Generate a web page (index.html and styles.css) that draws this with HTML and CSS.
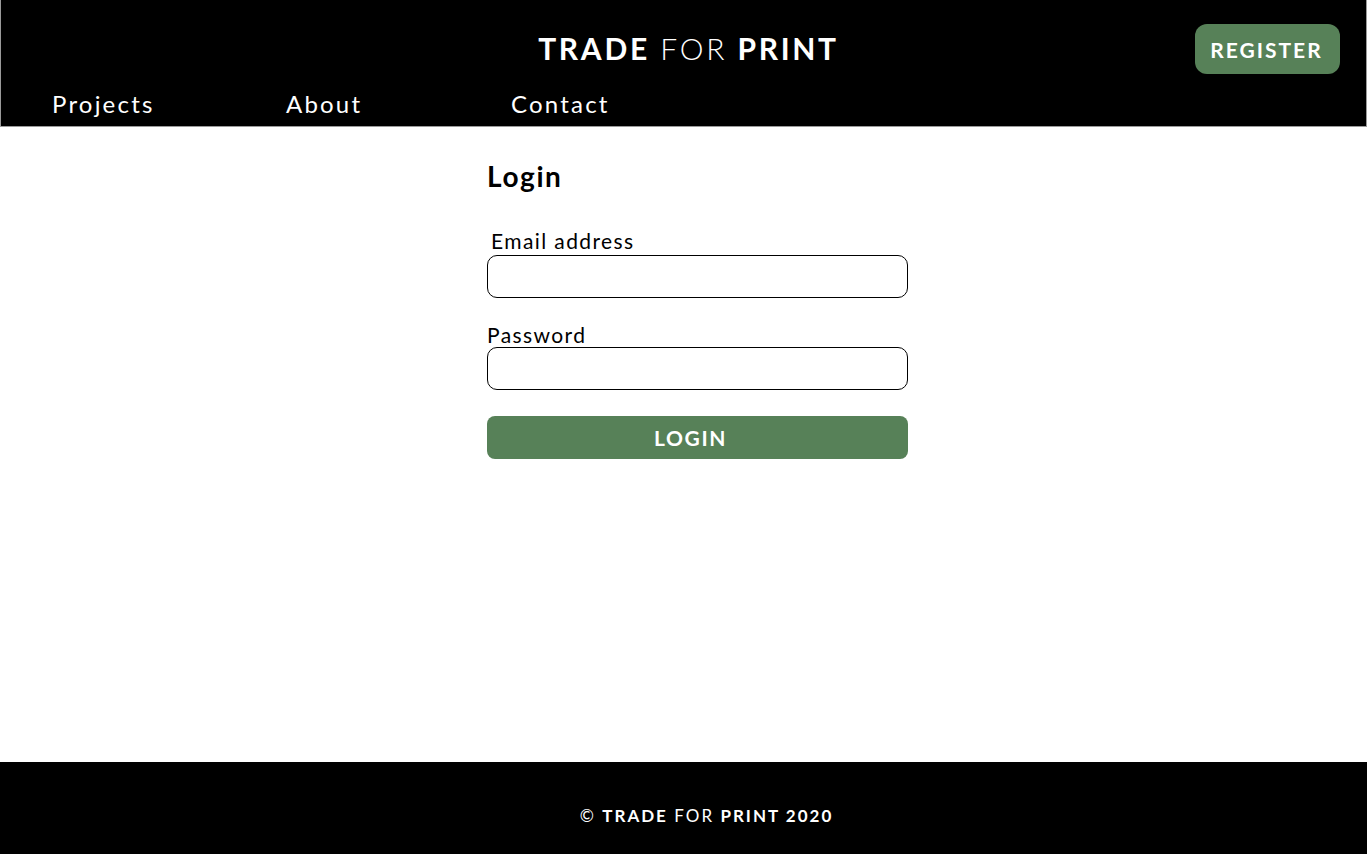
FILE: index.html
```html
<!DOCTYPE html>
<html lang="en">
<head>
<meta charset="utf-8">
<title>Trade For Print - Login</title>
<link rel="stylesheet" href="styles.css">
</head>
<body>
<div class="page">
  <header class="header">
    <div class="top-row">
      <div class="brand"><b>TRADE</b> <span class="light">FOR</span> <b>PRINT</b></div>
      <a class="register" href="#">REGISTER</a>
    </div>
    <nav class="nav">
      <a href="#" class="nav-projects">Projects</a>
      <a href="#" class="nav-about">About</a>
      <a href="#" class="nav-contact">Contact</a>
    </nav>
  </header>
  <main class="main">
    <form class="login-form">
      <h1 class="title">Login</h1>
      <label class="label label-email">Email address</label>
      <input class="field" type="email">
      <label class="label label-password">Password</label>
      <input class="field" type="password">
      <button class="login-btn" type="button">LOGIN</button>
    </form>
  </main>
  <footer class="footer">
    <p class="footer-text">© <b>TRADE</b> <span class="light">FOR</span> <b>PRINT 2020</b></p>
  </footer>
</div>
</body>
</html>
```
FILE: styles.css
```css
* { box-sizing: border-box; }
html, body { margin: 0; padding: 0; }
body {
  font-family: "Lato", "Open Sans", sans-serif;
  color: #000;
  background: #fff;
}
.page {
  display: flex;
  flex-direction: column;
  min-height: 854px;
}
.header {
  background: #000;
  color: #fff;
  border: 1px solid #9a9a9a;
  border-top: none;
  height: 127px;
  display: flex;
  flex-direction: column;
}
.top-row {
  position: relative;
  height: 86px;
  display: flex;
  align-items: center;
  justify-content: center;
}
.brand {
  font-size: 30px;
  letter-spacing: 2.7px;
  margin-top: 10px;
  margin-left: 10px;
}
.brand b { font-weight: 700; }
.light { font-weight: 300; }
.register {
  position: absolute;
  right: 26px;
  top: 24px;
  width: 145px;
  height: 50px;
  border-radius: 12px;
  background: #578158;
  color: #fff;
  text-decoration: none;
  font-weight: 700;
  font-size: 21px;
  letter-spacing: 2px;
  display: flex;
  align-items: center;
  justify-content: center;
  padding-right: 2px;
}
.nav {
  display: flex;
  padding-left: 51px;
  padding-top: 6px;
  height: 40px;
  align-items: flex-start;
}
.nav a {
  color: #fff;
  text-decoration: none;
  font-size: 24px;
  letter-spacing: 2.2px;
  line-height: 1;
}
.nav-projects { width: 234px; }
.nav-about { width: 225px; }
.main {
  flex: 1;
  padding-left: 487px;
  padding-top: 33px;
}
.login-form {
  width: 421px;
  display: flex;
  flex-direction: column;
}
.title {
  margin: 0;
  font-size: 28px;
  font-weight: 700;
  letter-spacing: 1.6px;
  line-height: 32px;
}
.label {
  font-size: 21px;
  letter-spacing: 1.4px;
  line-height: 25px;
}
.label-email { margin-top: 36px; margin-bottom: 2px; padding-left: 4px; }
.label-password { margin-top: 24px; }
.field {
  height: 43px;
  border: 1px solid #000;
  border-radius: 10px;
  width: 421px;
  margin: 0;
  padding: 0 10px;
  font: inherit;
}
.login-btn {
  margin-top: 26px;
  height: 43px;
  width: 421px;
  border: none;
  border-radius: 8px;
  background: #578158;
  color: #fff;
  font-family: inherit;
  font-weight: 700;
  font-size: 21px;
  letter-spacing: 1.6px;
  padding: 0 14px 0 0;
}
.footer {
  background: #000;
  color: #fff;
  height: 92px;
  display: flex;
  align-items: center;
  justify-content: center;
  padding-left: 46px;
}
.footer-text {
  margin: 0;
  font-size: 17px;
  letter-spacing: 2px;
  margin-top: 14px;
}
.footer-text b { font-weight: 700; }
.footer-text .light { font-weight: 400; }
```
